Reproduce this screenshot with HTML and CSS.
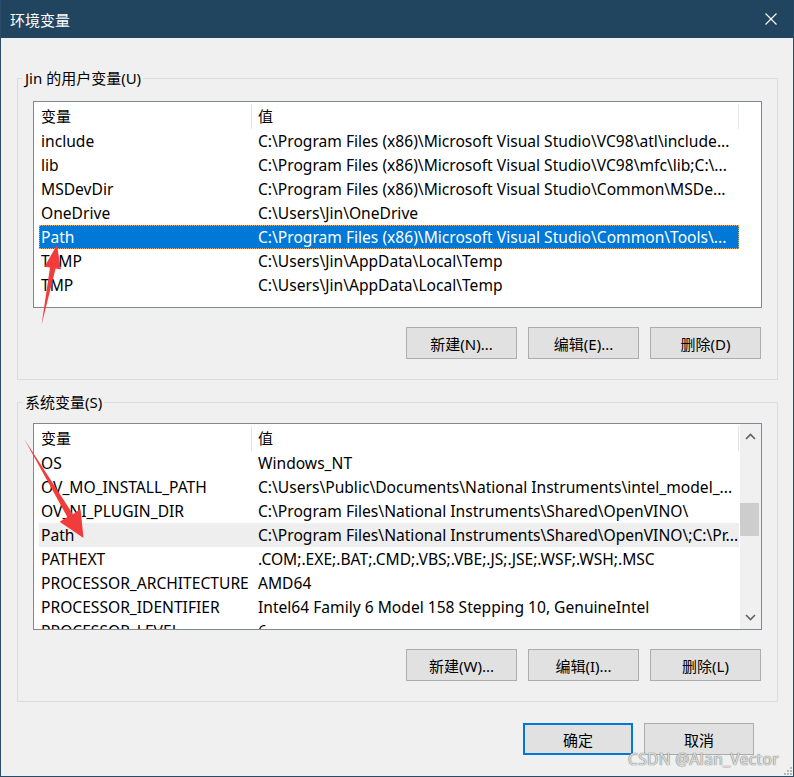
FILE: index.html
```html
<!DOCTYPE html>
<html lang="zh-CN">
<head>
    <meta charset="UTF-8">
    <title>环境变量</title>
    <link rel="stylesheet" href="styles.css">
</head>
<body>
    <div class="window">
        <div class="titlebar">
            <span class="title">环境变量</span>
            <svg class="close" width="14" height="14" viewBox="0 0 14 14">
                <path d="M1.5 1.5 L12.5 12.5 M12.5 1.5 L1.5 12.5" stroke="#fff" stroke-width="1.1" fill="none"/>
            </svg>
        </div>

        <div class="dialog-body">
            <fieldset class="group">
                <legend>Jin 的用户变量(U)</legend>
                <div class="listview">
                    <div class="lv-main">
                        <div class="lv-head">
                            <div class="hcell hcell-name">变量</div>
                            <div class="hcell hcell-value">值</div>
                        </div>
                        <div class="lv-row"><div class="cell-name">include</div><div class="cell-value">C:\Program Files (x86)\Microsoft Visual Studio\VC98\atl\include...</div></div>
                        <div class="lv-row"><div class="cell-name">lib</div><div class="cell-value">C:\Program Files (x86)\Microsoft Visual Studio\VC98\mfc\lib;C:\...</div></div>
                        <div class="lv-row"><div class="cell-name">MSDevDir</div><div class="cell-value">C:\Program Files (x86)\Microsoft Visual Studio\Common\MSDe...</div></div>
                        <div class="lv-row"><div class="cell-name">OneDrive</div><div class="cell-value">C:\Users\Jin\OneDrive</div></div>
                        <div class="lv-row selected"><div class="cell-name">Path</div><div class="cell-value">C:\Program Files (x86)\Microsoft Visual Studio\Common\Tools\...</div></div>
                        <div class="lv-row"><div class="cell-name">TEMP</div><div class="cell-value">C:\Users\Jin\AppData\Local\Temp</div></div>
                        <div class="lv-row"><div class="cell-name">TMP</div><div class="cell-value">C:\Users\Jin\AppData\Local\Temp</div></div>
                    </div>
                </div>
                <div class="btn-row">
                    <button class="btn">新建(N)...</button>
                    <button class="btn">编辑(E)...</button>
                    <button class="btn">删除(D)</button>
                </div>
            </fieldset>

            <fieldset class="group group-system">
                <legend>系统变量(S)</legend>
                <div class="listview">
                    <div class="lv-main">
                        <div class="lv-head">
                            <div class="hcell hcell-name">变量</div>
                            <div class="hcell hcell-value">值</div>
                        </div>
                        <div class="lv-row"><div class="cell-name">OS</div><div class="cell-value">Windows_NT</div></div>
                        <div class="lv-row"><div class="cell-name">OV_MO_INSTALL_PATH</div><div class="cell-value">C:\Users\Public\Documents\National Instruments\intel_model_...</div></div>
                        <div class="lv-row"><div class="cell-name">OV_NI_PLUGIN_DIR</div><div class="cell-value">C:\Program Files\National Instruments\Shared\OpenVINO\</div></div>
                        <div class="lv-row hover"><div class="cell-name">Path</div><div class="cell-value">C:\Program Files\National Instruments\Shared\OpenVINO\;C:\Pr...</div></div>
                        <div class="lv-row"><div class="cell-name">PATHEXT</div><div class="cell-value">.COM;.EXE;.BAT;.CMD;.VBS;.VBE;.JS;.JSE;.WSF;.WSH;.MSC</div></div>
                        <div class="lv-row"><div class="cell-name">PROCESSOR_ARCHITECTURE</div><div class="cell-value">AMD64</div></div>
                        <div class="lv-row"><div class="cell-name">PROCESSOR_IDENTIFIER</div><div class="cell-value">Intel64 Family 6 Model 158 Stepping 10, GenuineIntel</div></div>
                        <div class="lv-row"><div class="cell-name">PROCESSOR_LEVEL</div><div class="cell-value">6</div></div>
                    </div>
                    <div class="scrollbar">
                        <div class="sb-arrow">
                            <svg width="11" height="7" viewBox="0 0 11 7"><path d="M1 6 L5.5 1.5 L10 6" stroke="#606060" stroke-width="1.6" fill="none"/></svg>
                        </div>
                        <div class="sb-track"><div class="sb-thumb"></div></div>
                        <div class="sb-arrow">
                            <svg width="11" height="7" viewBox="0 0 11 7"><path d="M1 1 L5.5 5.5 L10 1" stroke="#606060" stroke-width="1.6" fill="none"/></svg>
                        </div>
                    </div>
                </div>
                <div class="btn-row">
                    <button class="btn">新建(W)...</button>
                    <button class="btn">编辑(I)...</button>
                    <button class="btn">删除(L)</button>
                </div>
            </fieldset>

            <div class="dialog-buttons">
                <button class="btn btn-default">确定</button>
                <button class="btn">取消</button>
            </div>
        </div>

        <!-- red annotation arrows drawn over the dialog -->
        <svg class="annotations" width="794" height="777" viewBox="0 0 794 777">
            <path d="M41.5 325 L55.6 268.6 L60.9 269.6 L57 245 L44.6 266.4 L50 267.6 Z" fill="#f23c3c"/>
            <path d="M24.5 439.5 L72.9 514.2 L80.6 509.3 L83.5 538 L59.6 521.8 L67.3 516.9 Z" fill="#f23c3c"/>
        </svg>

        <div class="watermark">CSDN @Alan_Vector</div>
        <svg class="grip" width="10" height="10" viewBox="0 0 10 10">
            <rect x="7" y="1" width="2" height="2" fill="#b8b8b8"/>
            <rect x="4" y="4" width="2" height="2" fill="#b8b8b8"/>
            <rect x="7" y="4" width="2" height="2" fill="#b8b8b8"/>
            <rect x="1" y="7" width="2" height="2" fill="#b8b8b8"/>
            <rect x="4" y="7" width="2" height="2" fill="#b8b8b8"/>
            <rect x="7" y="7" width="2" height="2" fill="#b8b8b8"/>
        </svg>
    </div>
</body>
</html>
```

FILE: styles.css
```css
body {
    margin: 0;
    font-family: "Noto Sans", "Noto Sans CJK SC", sans-serif;
    font-size: 15.6px;
    color: #000;
}

.window {
    position: relative;
    width: 794px;
    height: 777px;
    box-sizing: border-box;
    border: 1px solid #2b4b69;
    border-top: none;
    background: #f0f0f0;
    overflow: hidden;
}

.titlebar {
    height: 38px;
    background: #21445f;
    display: flex;
    align-items: center;
    justify-content: space-between;
    padding: 0 15px 0 9px;
    color: #fff;
}

.title {
    font-family: "Noto Sans CJK SC", sans-serif;
    font-size: 15px;
    padding-top: 1px;
}

.close {
    display: block;
}

.dialog-body {
    padding: 0 15px 0 16px;
}

/* group boxes */
.group {
    margin: 30px 0 0 0;
    padding: 13px 15px 20px 15px;
    border: 1px solid #dcdcdc;
    min-width: 0;
}

.group-system {
    margin-top: 12px;
    padding-top: 11px;
}

.group legend {
    margin-left: -11px;
    padding: 0 2px 0 3px;
    line-height: 20px;
    font-size: 15px;
    font-family: "Noto Sans", "Noto Sans CJK SC", sans-serif;
}

/* list view */
.listview {
    width: 729px;
    height: 207px;
    box-sizing: border-box;
    border: 1px solid #828790;
    background: #fff;
    display: flex;
    overflow: hidden;
}

.lv-main {
    flex: 1;
    padding-left: 5px;
    overflow: hidden;
}

.lv-head {
    display: flex;
    height: 27px;
    align-items: center;
}

.hcell {
    box-sizing: border-box;
    height: 25px;
    line-height: 24px;
    margin-top: 1px;
    border-right: 1px solid #e5e5e5;
    font-family: "Noto Sans CJK SC", sans-serif;
    font-size: 15px;
}

.hcell-name {
    width: 213px;
    padding-left: 2px;
}

.hcell-value {
    width: 487px;
    padding-left: 6px;
}

.lv-row {
    display: flex;
    width: 700px;
    height: 24px;
    line-height: 24px;
    white-space: nowrap;
}

.cell-name {
    width: 219px;
    flex: none;
    box-sizing: border-box;
    padding-left: 2px;
    overflow: hidden;
}

.cell-value {
    flex: 1;
    overflow: hidden;
}

.lv-row.selected {
    background: #0078d7;
    color: #fff;
    outline: 1px dotted #f2a65a;
    outline-offset: -1px;
}

.lv-row.hover {
    background: #eeeeee;
}

/* scroll bar */
.scrollbar {
    width: 21px;
    flex: none;
    background: #f0f0f0;
    display: flex;
    flex-direction: column;
}

.sb-arrow {
    height: 24px;
    display: flex;
    align-items: center;
    justify-content: center;
}

.sb-track {
    flex: 1;
}

.sb-thumb {
    margin-top: 55px;
    width: 19px;
    height: 33px;
    background: #cdcdcd;
}

/* buttons */
.btn-row {
    display: flex;
    justify-content: flex-end;
    gap: 11px;
    margin-top: 19px;
    padding-right: 1px;
}

.btn {
    width: 111px;
    height: 32px;
    box-sizing: border-box;
    background: #e1e1e1;
    border: 1px solid #adadad;
    font-family: "Noto Sans", "Noto Sans CJK SC", sans-serif;
    font-size: 15px;
    color: #000;
    padding: 0;
}

.dialog-buttons {
    display: flex;
    justify-content: flex-end;
    gap: 11px;
    margin-top: 21px;
    padding-right: 24px;
}

.dialog-buttons .btn {
    width: 110px;
}

.btn-default {
    border: 2px solid #0078d7;
}

/* overlays */
.annotations {
    position: absolute;
    left: -1px;
    top: 0;
    pointer-events: none;
}

.watermark {
    position: absolute;
    right: 14px;
    bottom: 6px;
    font-family: "Noto Sans", sans-serif;
    font-size: 15.6px;
    color: rgba(236, 236, 236, 0.9);
    text-shadow: 0 0 1px #6f6f6f, 0 0 1px #6f6f6f;
    letter-spacing: 0.3px;
}

.grip {
    position: absolute;
    right: 0;
    bottom: 0;
}
```
